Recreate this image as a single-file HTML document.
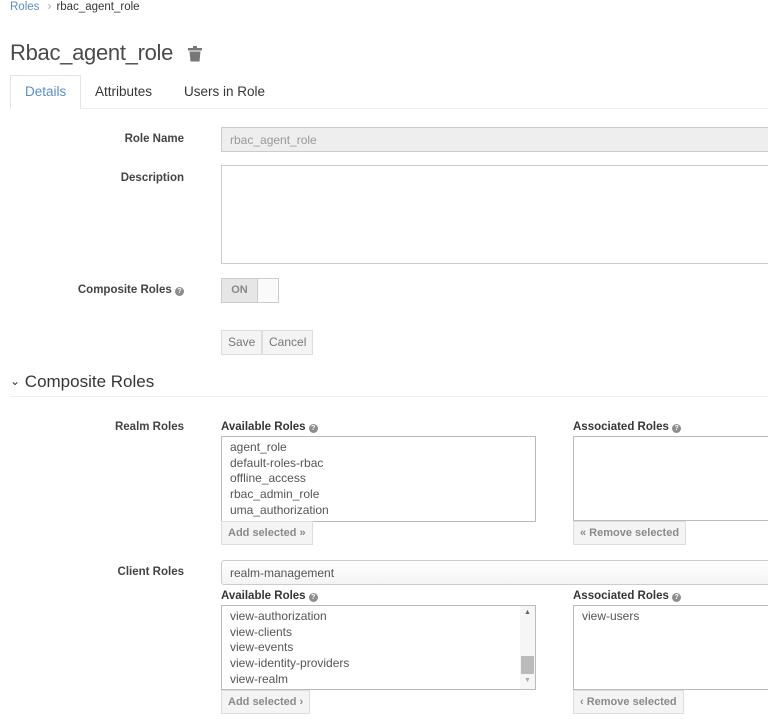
<!DOCTYPE html>
<html><head><meta charset="utf-8"><style>
body{margin:0;width:768px;height:727px;overflow:hidden;background:#fff;font-family:"Liberation Sans",sans-serif;color:#363636;font-size:12px;position:relative}
.a{position:absolute;white-space:nowrap}
.lbl{position:absolute;right:584px;font-weight:bold;font-size:11.5px;color:#444}
.q{display:inline-block;width:9px;height:9px;border-radius:50%;background:#8b8d8f;color:#fff;font-size:7px;line-height:9px;text-align:center;font-weight:bold;vertical-align:0px}
.box{position:absolute;border:1px solid #bbb;background:#fff;box-sizing:border-box}
.btn{position:absolute;border:1px solid #ddd;background:#f4f4f4;color:#8a8a8a;box-sizing:border-box;font-size:11px;font-weight:bold;line-height:22px;padding:0 6px}
.list div{height:15.7px;line-height:15.7px;color:#555;font-size:12px}
</style></head><body>
<div class="a" style="left:10px;top:1px;font-size:11.5px;color:#5a8ec8">Roles <span style="color:#aaa;margin:0 5px">›</span><span style="color:#363636">rbac_agent_role</span></div>
<div class="a" style="left:10px;top:40px;font-size:22px;color:#4a4a4a;letter-spacing:-0.3px">Rbac_agent_role</div>
<svg class="a" style="left:188px;top:46px" width="14" height="16" viewBox="0 0 14 16"><rect x="0" y="2" width="14" height="2.5" fill="#777"/><rect x="5" y="0" width="4" height="3" fill="#777"/><path d="M1.5 5.5h11l-1 10h-9z" fill="#777"/></svg>
<div class="a" style="left:10px;top:75px;width:71px;height:34px;border:1px solid #e4e4e4;border-bottom:none;background:#fff;box-sizing:border-box"></div>
<div class="a" style="left:81px;top:108px;width:687px;height:1px;background:#eee"></div>
<div class="a" style="left:25px;top:84px;font-size:13.5px;color:#5a8ec8">Details</div>
<div class="a" style="left:95px;top:84px;font-size:13.5px;color:#363636">Attributes</div>
<div class="a" style="left:184px;top:84px;font-size:13.5px;color:#363636">Users in Role</div>

<div class="lbl" style="top:133px">Role Name</div>
<div class="box" style="left:221px;top:127px;width:560px;height:25px;background:#eee;border-color:#ccc;color:#999;padding:5px 8px">rbac_agent_role</div>
<div class="lbl" style="top:172px">Description</div>
<div class="box" style="left:221px;top:165px;width:560px;height:99px;border-color:#ccc"></div>
<div class="lbl" style="top:284px">Composite Roles <span class="q">?</span></div>
<div class="box" style="left:221px;top:278px;width:58px;height:25px;border-color:#ccc;background:#fafafa"></div>
<div class="a" style="left:222px;top:279px;width:35px;height:23px;background:#e6e6e6;border-right:1px solid #ccc;color:#888;font-weight:bold;font-size:11px;line-height:23px;text-align:center">ON</div>
<div class="btn" style="left:221px;top:330px;height:25px;font-weight:normal;font-size:12px;color:#777">Save</div>
<div class="btn" style="left:262px;top:330px;height:25px;font-weight:normal;font-size:12px;color:#777">Cancel</div>

<div class="a" style="left:10px;top:372px;font-size:17px;color:#363636"><span style="font-size:12px;position:relative;top:-2px">&#8964;</span> Composite Roles</div>
<div class="a" style="left:10px;top:396px;width:758px;height:1px;background:#eee"></div>

<div class="lbl" style="top:421px">Realm Roles</div>
<div class="a" style="left:221px;top:421px;font-weight:bold;font-size:11.5px">Available Roles <span class="q">?</span></div>
<div class="box list" style="left:221px;top:436px;width:315px;height:86px;padding:3px 8px">
<div>agent_role</div><div>default-roles-rbac</div><div>offline_access</div><div>rbac_admin_role</div><div>uma_authorization</div></div>
<div class="btn" style="left:221px;top:521px;height:24px">Add selected »</div>
<div class="a" style="left:573px;top:421px;font-weight:bold;font-size:11.5px">Associated Roles <span class="q">?</span></div>
<div class="box" style="left:573px;top:436px;width:210px;height:85px"></div>
<div class="btn" style="left:573px;top:521px;height:24px">« Remove selected</div>

<div class="lbl" style="top:566px">Client Roles</div>
<div class="box" style="left:221px;top:560px;width:560px;height:25px;border-color:#ccc;border-radius:3px;background:linear-gradient(#fff,#f4f4f4);color:#555;padding:5px 8px">realm-management</div>
<div class="a" style="left:221px;top:590px;font-weight:bold;font-size:11.5px">Available Roles <span class="q">?</span></div>
<div class="box list" style="left:221px;top:605px;width:315px;height:85px;padding:3px 8px">
<div>view-authorization</div><div>view-clients</div><div>view-events</div><div>view-identity-providers</div><div>view-realm</div></div>
<div class="a" style="left:520px;top:606px;width:15px;height:83px;background:#f6f6f6"></div>
<div class="a" style="left:521px;top:656px;width:13px;height:18px;background:#bbb"></div>
<div class="a" style="left:524px;top:609px;font-size:7px;color:#666">▲</div>
<div class="a" style="left:524px;top:677px;font-size:7px;color:#aaa">▼</div>
<div class="btn" style="left:221px;top:690px;height:24px">Add selected ›</div>
<div class="a" style="left:573px;top:590px;font-weight:bold;font-size:11.5px">Associated Roles <span class="q">?</span></div>
<div class="box list" style="left:573px;top:605px;width:210px;height:85px;padding:3px 8px"><div>view-users</div></div>
<div class="btn" style="left:573px;top:690px;height:24px">‹ Remove selected</div>
</body></html>
